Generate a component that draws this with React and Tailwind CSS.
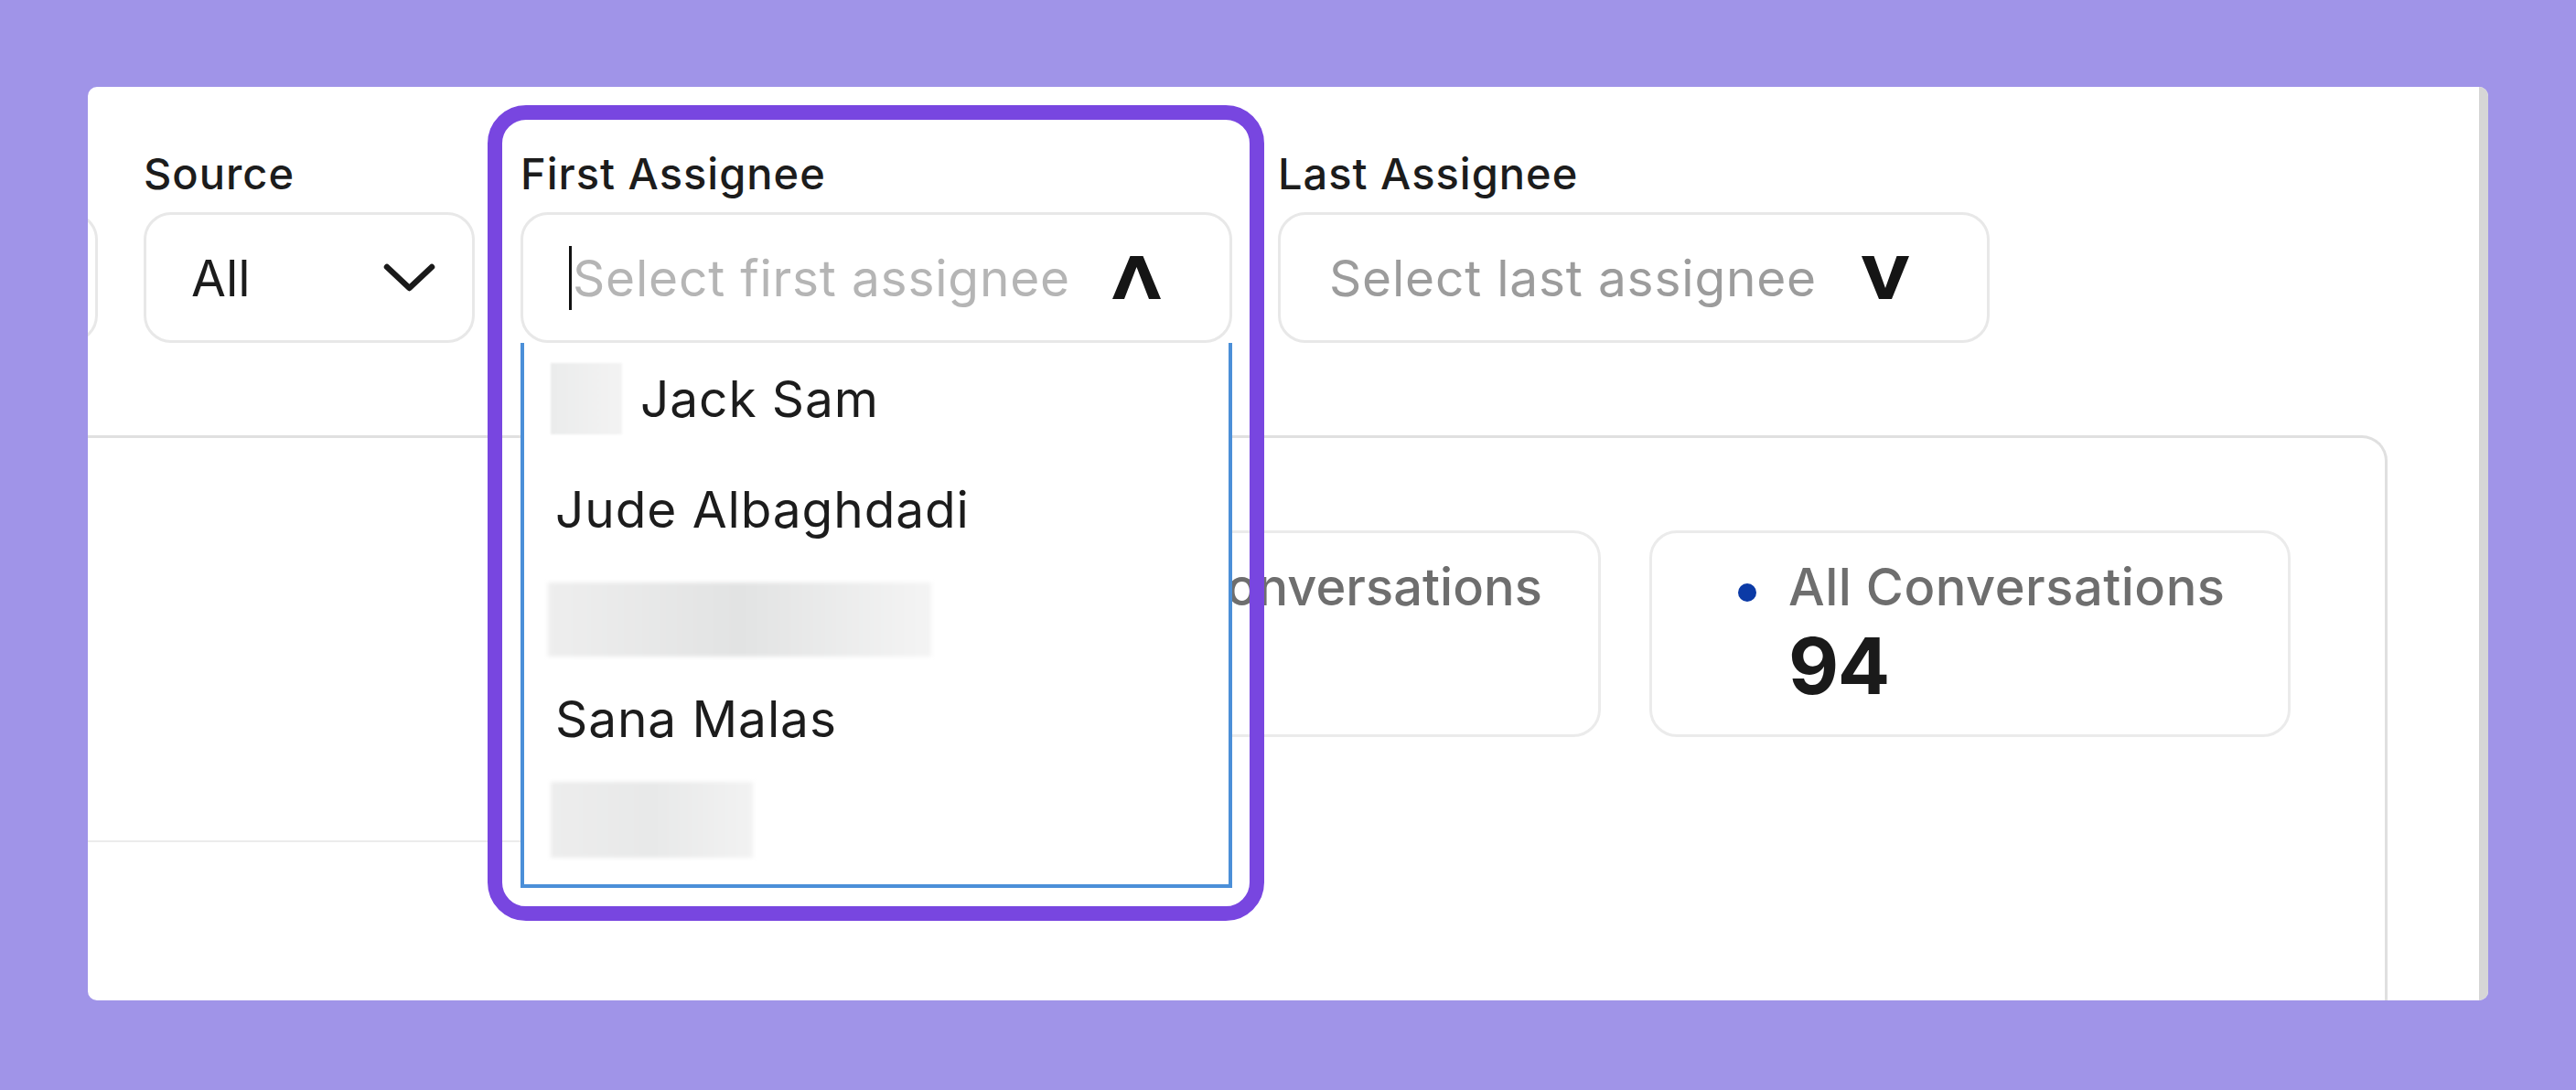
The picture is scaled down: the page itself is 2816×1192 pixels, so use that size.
import React from "react";

const ChevronDown = () => (
  <svg width="57" height="31" viewBox="0 0 57 31" fill="none">
    <path d="M4 4 L28.5 27 L53 4" stroke="#1a1a1a" strokeWidth="6.5" strokeLinecap="round" strokeLinejoin="round" />
  </svg>
);

const CaretUp = () => (
  <svg width="53" height="47" viewBox="0 0 53 47">
    <polygon points="19.5,0 33.5,0 53,47 40,47 26.5,12 13,47 0,47" fill="#151515" />
  </svg>
);

const CaretV = () => (
  <svg width="52" height="47" viewBox="0 0 52 47">
    <polygon points="0,0 13.5,0 26,35 38.5,0 52,0 33,47 19,47" fill="#151515" />
  </svg>
);

function Label({ children }) {
  return (
    <div className="h-[56px] text-[47px] leading-[56px] font-medium text-[#1c1c1c] tracking-[1px]">
      {children}
    </div>
  );
}

function StatCard({ label, value, tight }) {
  return (
    <div className="w-[701px] h-[226px] shrink-0 rounded-[30px] border-[3px] border-[#ebebeb] bg-white pl-[94px] pt-[27px] flex items-start">
      <div className="mt-[28px] w-[20px] h-[20px] rounded-full bg-[#0b3aa6] shrink-0" />
      <div className="ml-[35px] flex flex-col">
        <div
          className={
            tight
              ? "text-[56px] leading-[64px] font-medium text-[#6e6e6e] tracking-normal whitespace-nowrap"
              : "text-[56px] leading-[64px] font-medium text-[#6e6e6e] tracking-[0.5px] whitespace-nowrap"
          }
        >
          {label}
        </div>
        <div className="mt-[10px] text-[85px] leading-[90px] font-bold text-[#1a1a1a] tracking-[-1.5px]">{value}</div>
      </div>
    </div>
  );
}

export default function App() {
  return (
    <div className="min-h-screen w-full bg-[#a094e8] pt-[95px] pl-[96px] font-['Inter','Liberation_Sans',sans-serif]">
      <div className="flex w-[2624px] h-[999px] rounded-[10px] bg-white overflow-hidden">
        <div className="relative flex-1 overflow-hidden">
          {/* Filters row */}
          <div className="pt-[67px] flex items-start gap-[50px]">
            {/* partially hidden filter */}
            <div className="ml-[-289px] w-[300px] shrink-0">
              <div className="h-[56px]" />
              <div className="mt-[14px] h-[143px] rounded-[30px] border-[3px] border-[#e8e8e8]" />
            </div>

            {/* Source */}
            <div className="w-[362px] shrink-0">
              <Label>Source</Label>
              <div className="mt-[14px] h-[143px] rounded-[30px] border-[3px] border-[#e8e8e8] flex items-center justify-between pl-[49px] pr-[40px]">
                <span className="text-[55px] leading-[66px] text-[#1c1c1c]">All</span>
                <ChevronDown />
              </div>
            </div>

            {/* First Assignee */}
            <div className="relative w-[778px] shrink-0 z-10">
              <Label>First Assignee</Label>
              <div className="mt-[14px] h-[143px] rounded-[30px] border-[3px] border-[#e8e8e8] bg-white flex items-center pl-[50px]">
                <span className="w-[3px] h-[70px] bg-[#111111] shrink-0" />
                <span className="ml-[1px] text-[55px] leading-[66px] text-[#b5b5b5] tracking-[0.8px] whitespace-nowrap">
                  Select first assignee
                </span>
                <span className="ml-[46px] flex items-center">
                  <CaretUp />
                </span>
              </div>

              {/* dropdown list */}
              <div className="absolute left-0 right-0 top-[213px] h-[596px] bg-white border-x-[4px] border-b-[4px] border-[#4b8fd8] flex flex-col">
                <div className="h-[122px] flex items-center pl-[29px] gap-[20px]">
                  <div className="w-[78px] h-[78px] bg-gradient-to-r from-[#ebecec] to-[#f3f3f3] blur-[1px]" />
                  <span className="text-[55px] leading-[66px] text-[#1c1c1c] tracking-[0.9px]">Jack Sam</span>
                </div>
                <div className="h-[120px] flex items-center pl-[34px]">
                  <span className="text-[55px] leading-[66px] text-[#1c1c1c] tracking-[0.9px]">Jude Albaghdadi</span>
                </div>
                <div className="h-[120px] flex items-center pl-[26px]">
                  <div className="w-[419px] h-[81px] bg-gradient-to-r from-[#eeeeee] via-[#e2e3e3] to-[#f4f4f4] blur-[2px]" />
                </div>
                <div className="h-[98px] flex items-center pl-[34px]">
                  <span className="text-[55px] leading-[66px] text-[#1c1c1c] tracking-[0.9px]">Sana Malas</span>
                </div>
                <div className="h-[122px] flex items-center pl-[29px]">
                  <div className="w-[221px] h-[83px] bg-gradient-to-r from-[#ededed] via-[#e8e9e9] to-[#f2f2f2] blur-[2px]" />
                </div>
              </div>
            </div>

            {/* Last Assignee */}
            <div className="w-[778px] shrink-0">
              <Label>Last Assignee</Label>
              <div className="mt-[14px] h-[143px] rounded-[30px] border-[3px] border-[#e8e8e8] flex items-center pl-[53px]">
                <span className="text-[55px] leading-[66px] text-[#9c9c9c] tracking-[0.8px] whitespace-nowrap">
                  Select last assignee
                </span>
                <span className="ml-[49px] flex items-center">
                  <CaretV />
                </span>
              </div>
            </div>
          </div>

          {/* Stats panel */}
          <div className="mt-[101px] ml-[-40px] w-[2554px] h-[700px] rounded-tr-[28px] border-t-[3px] border-r-[3px] border-[#e0e0e0]">
            <div className="pt-[101px] pr-[103px] flex justify-end gap-[53px]">
              <StatCard label="My Conversations" value="12" tight />
              <StatCard label="All Conversations" value="94" />
            </div>
            <div className="mt-[113px] w-[1000px] border-t-[2px] border-[#ececec]" />
          </div>

          {/* highlight overlay */}
          <div className="absolute left-[437px] top-[20px] w-[849px] h-[892px] rounded-[42px] border-[16px] border-[#7846e0] z-20 pointer-events-none" />
        </div>
        <div className="w-[10px] shrink-0 bg-[#d6d6d6]" />
      </div>
    </div>
  );
}
